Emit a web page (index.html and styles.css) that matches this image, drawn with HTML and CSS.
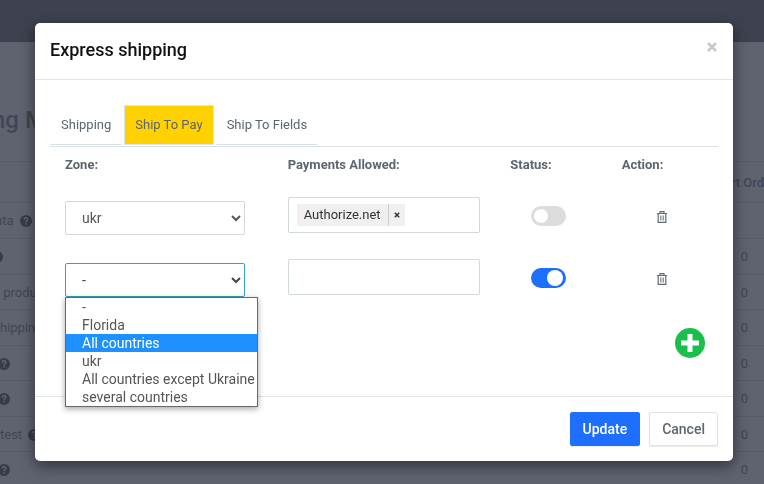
FILE: index.html
```
<!DOCTYPE html>
<html lang="en">

<head>
    <meta charset="UTF-8">
    <meta name="viewport" content="width=device-width, initial-scale=1.0">
    <title>Express shipping</title>
    <link rel="stylesheet" href="styles.css">
</head>

<body>
    <svg class="sprite" aria-hidden="true">
        <symbol id="help" viewBox="0 0 12 12">
            <circle cx="6" cy="6" r="6" />
            <path d="M4.2 4.6C4.3 3.3 5.1 2.8 6 2.8c1 0 1.8.6 1.8 1.6C7.8 5.6 6 5.700 6 7.200" fill="none" stroke="#5f6370" stroke-width="1.500" />
            <rect x="5.200" y="8.100" width="1.600" height="1.500" fill="#5f6370" />
        </symbol>
        <symbol id="trash" viewBox="0 0 10 12">
            <path d="M0 2.500h10M3 2V.6h4V2M1.200 3v8.400h7.600V3" fill="none" stroke="currentColor" stroke-width="1.200" />
            <path d="M3.500 4.500v5M5 4.500v5M6.500 4.500v5" fill="none" stroke="currentColor" stroke-width=".7" />
        </symbol>
    </svg>

    <!-- Page behind the dialog -->
    <div class="page" aria-hidden="true">
        <div class="topbar"></div>
        <h1 class="page-title">ng M</h1>
        <table class="methods">
            <thead>
                <tr><th></th><th class="order">rt Ord</th></tr>
            </thead>
            <tbody>
                <tr><td class="cut-text">nta <svg class="help"><use href="#help" /></svg></td><td class="order"></td></tr>
                <tr><td class="cut"><svg class="help"><use href="#help" /></svg></td><td class="order">0</td></tr>
                <tr><td>&nbsp;produ</td><td class="order">0</td></tr>
                <tr><td>hipping</td><td class="order">0</td></tr>
                <tr><td class="cut-less"><svg class="help"><use href="#help" /></svg></td><td class="order">0</td></tr>
                <tr><td class="cut-less"><svg class="help"><use href="#help" /></svg></td><td class="order">0</td></tr>
                <tr><td>test <svg class="help"><use href="#help" /></svg></td><td class="order">0</td></tr>
                <tr><td class="cut-less"><svg class="help"><use href="#help" /></svg></td><td class="order">0</td></tr>
            </tbody>
        </table>
    </div>

    <!-- Dialog -->
    <div class="overlay">
        <div class="modal" role="dialog" aria-labelledby="modalTitle">
            <div class="modal-header">
                <h2 id="modalTitle">Express shipping</h2>
                <button type="button" class="close" aria-label="Close">
                    <svg viewBox="0 0 10 10"><path d="M1 1l8 8M9 1L1 9" /></svg>
                </button>
            </div>

            <div class="modal-body">
                <nav class="tabs">
                    <a href="#shipping">Shipping</a>
                    <a href="#pay" class="active">Ship To Pay</a>
                    <a href="#fields">Ship To Fields</a>
                </nav>

                <div class="row head">
                    <div>Zone:</div>
                    <div>Payments Allowed:</div>
                    <div>Status:</div>
                    <div>Action:</div>
                </div>

                <div class="row">
                    <div class="zone">
                        <select aria-label="Zone">
                            <option>ukr</option>
                        </select>
                    </div>
                    <div>
                        <div class="payments">
                            <span class="tag">
                                <span class="tag-name">Authorize.net</span>
                                <button type="button" class="tag-remove" aria-label="Remove">
                                    <svg viewBox="0 0 6 6"><path d="M.8.8l4.400 4.400M5.200.8L.8 5.200" /></svg>
                                </button>
                            </span>
                            <input type="text" aria-label="Payments Allowed">
                        </div>
                    </div>
                    <div class="status"><input type="checkbox" class="switch" aria-label="Status"></div>
                    <div class="action">
                        <button type="button" class="delete" aria-label="Delete"><svg><use href="#trash" /></svg></button>
                    </div>
                </div>

                <div class="row">
                    <div class="zone">
                        <select class="open" aria-label="Zone">
                            <option>-</option>
                        </select>
                        <ul class="options" role="listbox">
                            <li role="option">-</li>
                            <li role="option">Florida</li>
                            <li role="option" class="selected" aria-selected="true">All countries</li>
                            <li role="option">ukr</li>
                            <li role="option">All countries except Ukraine</li>
                            <li role="option">several countries</li>
                        </ul>
                    </div>
                    <div>
                        <div class="payments">
                            <input type="text" aria-label="Payments Allowed">
                        </div>
                    </div>
                    <div class="status"><input type="checkbox" class="switch" aria-label="Status" checked></div>
                    <div class="action">
                        <button type="button" class="delete" aria-label="Delete"><svg><use href="#trash" /></svg></button>
                    </div>
                </div>

                <div class="add-row">
                    <button type="button" class="add" aria-label="Add">
                        <svg viewBox="0 0 30 30">
                            <circle cx="15" cy="15" r="15" fill="#1bbf4b" />
                            <path d="M15 6v18M6 15h18" stroke="#fff" stroke-width="5" />
                        </svg>
                    </button>
                </div>
            </div>

            <div class="modal-footer">
                <button type="button" class="btn primary">Update</button>
                <button type="button" class="btn">Cancel</button>
            </div>
        </div>
    </div>
</body>

</html>
```
FILE: styles.css
```
* {
    box-sizing: border-box;
}

body {
    margin: 0;
    font-family: Roboto, "Liberation Sans", sans-serif;
    font-size: 13px;
    color: #5b6670;
    background: #5f6370;
    overflow: hidden;
}

button {
    font-family: inherit;
    padding: 0;
    border: none;
    background: none;
    cursor: pointer;
}

.sprite {
    display: none;
}

/* Page behind the dialog */
.page {
    height: 100vh;
    overflow: hidden;
    color: #424654;
}

.topbar {
    height: 42px;
    background: #3e414f;
}

.page-title {
    margin: 62px 0 25px -8px;
    font-size: 24px;
    line-height: 32px;
    font-weight: 500;
}

.methods {
    width: 100%;
    border-collapse: collapse;
}

.methods th,
.methods td {
    height: 36px;
    padding: 0;
    border-top: 1px solid #575b69;
    text-align: left;
    white-space: nowrap;
}

.methods th {
    height: 41px;
    font-weight: 500;
}

.methods tbody tr:nth-child(odd) td {
    height: 35px;
}

.methods tbody tr:first-child td {
    height: 36px;
}

.methods .order {
    width: 32px;
}

.methods td.order {
    padding-left: 10px;
}

.help {
    width: 12px;
    height: 12px;
    margin-left: 3px;
    vertical-align: -2px;
    fill: #383b49;
}

.methods .cut-text {
    text-indent: -5px;
}

.cut .help {
    margin-left: -9px;
}

.cut-less .help {
    margin-left: -2px;
}

/* Dialog */
.overlay {
    position: fixed;
    inset: 0;
    padding: 23px 31px 23px 35px;
}

.modal {
    background: #fff;
    border-radius: 5px;
    box-shadow: 0 5px 15px rgba(0, 0, 0, 0.5);
}

.modal-header {
    display: flex;
    align-items: center;
    justify-content: space-between;
    height: 57px;
    padding: 0 15px 2px;
    border-bottom: 1px solid #e2e5e7;
}

.modal-header h2 {
    margin: 0;
    font-size: 18px;
    line-height: 24px;
    font-weight: 500;
    color: #111;
}

.close {
    display: flex;
    padding: 0 1px 6px;
}

.close svg {
    width: 10px;
    height: 10px;
    fill: none;
    stroke: #c8c8c8;
    stroke-width: 2.5;
}

.modal-body {
    padding: 25px 15px 38px;
}

.tabs {
    display: flex;
    gap: 2px;
    padding-bottom: 1px;
    border-bottom: 1px solid #d9e2e5;
}

.tabs a {
    height: 40px;
    padding: 0 10px;
    border: 1px solid transparent;
    border-bottom-color: #d9e0e3;
    line-height: 38px;
    color: #5b6670;
    text-decoration: none;
}

.tabs .active {
    background: #ffd100;
    border-color: #dde3e6;
}

.row {
    display: grid;
    grid-template-columns: minmax(0, 2fr) minmax(0, 2fr) minmax(0, 1fr) minmax(0, 1fr);
    margin-bottom: 24px;
}

.row > div {
    padding: 0 15px;
}

.row.head {
    margin: 8px 0 22px;
    font-weight: 700;
    line-height: 20px;
}

.zone {
    position: relative;
}

.zone select {
    display: block;
    width: 180px;
    height: 34px;
    margin-top: 4px;
    padding: 6px 0 6px 12px;
    border: 1px solid #cfd8da;
    border-radius: 2px;
    outline: none;
    font-family: inherit;
    font-size: 14px;
    color: #555;
    background: #fff;
}

.zone select.open {
    border-color: #2fa5b8;
    color: #444;
}

.options {
    position: absolute;
    top: 38px;
    left: 15px;
    width: 193px;
    margin: 0;
    padding: 0;
    border: 1px solid #686868;
    background: #fff;
    box-shadow: 0 2px 6px rgba(0, 0, 0, 0.35);
    list-style: none;
    font-size: 14px;
    line-height: 18px;
    color: #555;
    white-space: nowrap;
}

.options li {
    padding-left: 16px;
}

.options .selected {
    background: #1e90ff;
    color: #fff;
}

.payments {
    display: flex;
    align-items: center;
    height: 36px;
    padding: 0 8px;
    border: 1px solid #cfd8da;
    border-radius: 2px;
}

.payments input {
    flex: 1;
    min-width: 0;
    padding: 0;
    border: none;
    outline: none;
    font: inherit;
}

.tag {
    display: flex;
    height: 22px;
    background: #f0f0f0;
    line-height: 22px;
    color: #333;
}

.tag-name {
    padding: 0 7px;
}

.tag-remove {
    display: flex;
    align-items: center;
    padding: 0 5px;
    border-left: 1px solid #ccc;
}

.tag-remove svg {
    width: 6px;
    height: 6px;
    fill: none;
    stroke: #333;
    stroke-width: 1.5;
}

.row > .status {
    padding: 9px 0 0 36px;
}

.switch {
    appearance: none;
    display: block;
    width: 35px;
    height: 20px;
    margin: 0;
    padding: 3px;
    border-radius: 10px;
    background: #dcdcdc;
}

.switch::before {
    content: "";
    display: block;
    width: 14px;
    height: 14px;
    border-radius: 50%;
    background: #fff;
}

.switch:checked {
    background: #1f6fff;
}

.switch:checked::before {
    width: 16px;
    height: 16px;
    margin: -1px 0 0 13px;
}

.row > .action {
    padding: 14px 0 0 50px;
}

.delete {
    display: block;
    color: #5f6a73;
}

.delete svg {
    display: block;
    width: 10px;
    height: 12px;
}

.add-row {
    display: flex;
    justify-content: flex-end;
    margin-top: 31px;
    padding-right: 13px;
}

.add svg {
    display: block;
    width: 30px;
    height: 30px;
}

.modal-footer {
    display: flex;
    justify-content: flex-end;
    gap: 9px;
    padding: 15px;
    border-top: 1px solid #e2e5e7;
}

.btn {
    height: 34px;
    padding: 0 12px;
    border: 1px solid #dde2e4;
    border-radius: 2px;
    font-size: 14px;
    font-weight: 500;
    color: #5b6670;
    background: #fff;
    box-shadow: 0 1px 1px rgba(0, 0, 0, 0.08);
}

.btn.primary {
    border-color: #1f6fff;
    background: #1f6fff;
    color: #fff;
}
```
